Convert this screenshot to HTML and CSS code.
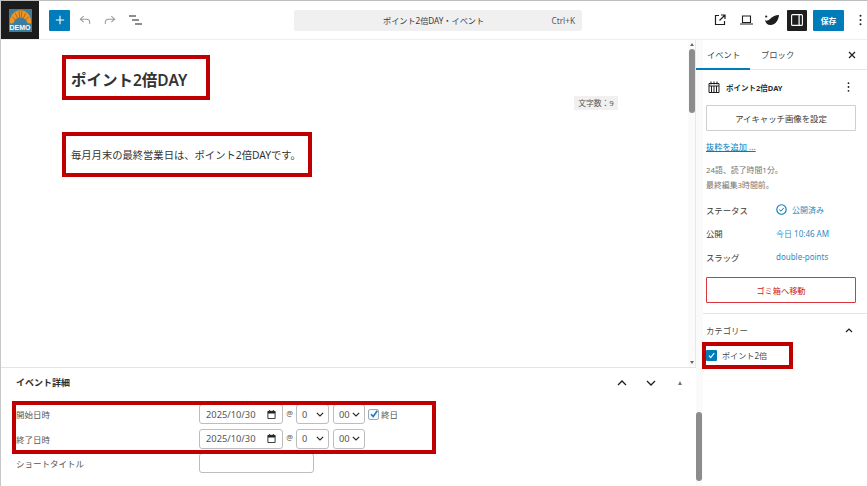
FILE: index.html
```html
<!DOCTYPE html>
<html lang="ja">
<head>
<meta charset="utf-8">
<title>ポイント2倍DAY ‹ イベント</title>
<link rel="stylesheet" href="styles.css">
</head>
<body>
<div class="app">
  <header class="topbar">
    <div class="logo-cell">
      <div class="logo-tile">
        <svg class="croissant" viewBox="0 0 24 15" width="23" height="15">
          <path d="M1 14.500C.2 8 4.500 1 12 1s11.800 7 11 13.500c-1 .6-3.300.2-4-.5-.6-3-3.300-5.500-7-5.500S5.600 11 5 14c-.7.700-3 1.100-4 .5z" fill="#ee9527"/>
          <path d="M6.500 4 9 9.200M10.500 1.500l.6 7M13.500 1.500l-.6 7M17.500 4 15 9.200M3.200 7.500l3.300 3.500M20.800 7.500 17.500 11" stroke="#a85f12" stroke-width=".9" fill="none"/>
        </svg>
        <span class="logo-text">DEMO</span>
      </div>
    </div>
    <div class="tools-left">
      <button class="plus-btn"><svg viewBox="0 0 12 12" width="10" height="10"><path d="M6 1v10M1 6h10" stroke="#fff" stroke-width="1.300"/></svg></button>
      <svg class="tool undo" viewBox="0 0 14 12" width="12" height="11"><path d="M5.500 1 1.500 4.500l4 3.500M1.500 4.500H9c2.300 0 3.500 1.500 3.500 3.500v2" fill="none" stroke="#9a9a9a" stroke-width="1.200"/></svg>
      <svg class="tool redo" viewBox="0 0 14 12" width="12" height="11"><path d="M8.500 1l4 3.500-4 3.500M12.500 4.500H5C2.700 4.500 1.500 6 1.500 8v2" fill="none" stroke="#9a9a9a" stroke-width="1.200"/></svg>
      <svg class="tool list" viewBox="0 0 13 10" width="13" height="10"><path d="M0 1h7M3 5h7M6 9h7" stroke="#1e1e1e" stroke-width="1.200"/></svg>
    </div>
    <div class="search">
      <span class="search-title">ポイント2倍DAY・イベント</span>
      <span class="search-key">Ctrl+K</span>
    </div>
    <div class="tools-right">
      <svg class="r-ext" viewBox="0 0 12 12" width="12" height="12"><path d="M5 1.500H1.500v9h9V7M7 1h4v4M11 1 5.500 6.500" fill="none" stroke="#1e1e1e" stroke-width="1.200"/></svg>
      <svg class="r-dev" viewBox="0 0 13 10" width="13" height="10"><path d="M2.500 1h8v6.500h-8zM0 9h13" fill="none" stroke="#1e1e1e" stroke-width="1.100"/></svg>
      <svg class="r-leaf" viewBox="0 0 16 12" width="16" height="12"><path d="M1 6c1.500 1.500 3 .5 5-1 2-2 5-4 9-4-.2 4-3 10-8.500 10C3.500 11 1.500 9 1 6z" fill="#1e1e1e"/><circle cx="2.200" cy="2.500" r="1.100" fill="#1e1e1e"/></svg>
      <button class="panel-btn"><svg viewBox="0 0 12 12" width="12" height="12"><rect x=".6" y=".6" width="10.800" height="10.800" rx="1" fill="none" stroke="#fff" stroke-width="1.100"/><rect x="7.500" y="1" width="1.200" height="10" fill="#fff"/></svg></button>
      <button class="save-btn">保存</button>
      <svg class="r-more" viewBox="0 0 3 12" width="3" height="12"><circle cx="1.500" cy="1.800" r="1" fill="#1e1e1e"/><circle cx="1.500" cy="6" r="1" fill="#1e1e1e"/><circle cx="1.500" cy="10.200" r="1" fill="#1e1e1e"/></svg>
    </div>
  </header>

  <div class="workspace">
    <div class="left">
      <div class="upper">
        <main class="editor">
          <h1 class="post-title">ポイント2倍DAY</h1>
          <div class="count-row"><span class="count">文字数：9</span></div>
          <p class="post-body">毎月月末の最終営業日は、ポイント2倍DAYです。</p>
        </main>
        <div class="scroll-up">
          <span class="arrow-up"></span>
          <span class="thumb"></span>
          <span class="arrow-down"></span>
        </div>
      </div>
      <section class="meta">
        <div class="meta-head">
          <h2>イベント詳細</h2>
          <svg class="m-up" viewBox="0 0 10 6" width="10" height="6"><path d="M1 5l4-4 4 4" fill="none" stroke="#1e1e1e" stroke-width="1.300"/></svg>
          <svg class="m-down" viewBox="0 0 10 6" width="10" height="6"><path d="M1 1l4 4 4-4" fill="none" stroke="#1e1e1e" stroke-width="1.300"/></svg>
          <span class="m-tri"></span>
        </div>
        <div class="meta-row">
          <span class="meta-label">開始日時</span>
          <span class="date">2025/10/30<svg viewBox="0 0 10 10" width="9" height="9"><path d="M1 1.500h8v8H1z" fill="none" stroke="#222" stroke-width="1"/><path d="M1 1.500h8V4H1zM2.500 0h1v2h-1zM6.500 0h1v2h-1z" fill="#222"/></svg></span>
          <span class="at">@</span>
          <span class="sel sel-h">0<svg viewBox="0 0 8 5" width="8" height="5"><path d="M.8.8 4 4 7.200.8" fill="none" stroke="#222" stroke-width="1.100"/></svg></span>
          <span class="sel sel-m">00<svg viewBox="0 0 8 5" width="8" height="5"><path d="M.8.800 4 4 7.200.8" fill="none" stroke="#222" stroke-width="1.100"/></svg></span>
          <span class="chk-small"><svg viewBox="0 0 10 10" width="10" height="10"><path d="M2 5.200 4.200 7.500 8.300 1.800" fill="none" stroke="#1a73c9" stroke-width="1.500"/></svg></span>
          <span class="allday">終日</span>
        </div>
        <div class="meta-row">
          <span class="meta-label">終了日時</span>
          <span class="date">2025/10/30<svg viewBox="0 0 10 10" width="9" height="9"><path d="M1 1.500h8v8H1z" fill="none" stroke="#222" stroke-width="1"/><path d="M1 1.500h8V4H1zM2.500 0h1v2h-1zM6.500 0h1v2h-1z" fill="#222"/></svg></span>
          <span class="at">@</span>
          <span class="sel sel-h">0<svg viewBox="0 0 8 5" width="8" height="5"><path d="M.8.8 4 4 7.200.8" fill="none" stroke="#222" stroke-width="1.100"/></svg></span>
          <span class="sel sel-m">00<svg viewBox="0 0 8 5" width="8" height="5"><path d="M.8.800 4 4 7.200.8" fill="none" stroke="#222" stroke-width="1.100"/></svg></span>
        </div>
        <div class="meta-row">
          <span class="meta-label">ショートタイトル</span>
          <span class="text-input"></span>
        </div>
      </section>
    </div>

    <div class="scroll-side"><span class="thumb-side"></span></div>

    <aside class="sidebar">
      <nav class="tabs">
        <span class="tab active">イベント</span>
        <span class="tab">ブロック</span>
        <svg class="close" viewBox="0 0 8 8" width="8" height="8"><path d="M1 1l6 6M7 1 1 7" stroke="#1e1e1e" stroke-width="1.200"/></svg>
      </nav>
      <section class="panel">
        <div class="post-row">
          <svg viewBox="0 0 12 12" width="12" height="12"><path d="M1 2.500h10V11.500H1zM1 5h10M3 .5v3M6 .5v3M9 .5v3M3.500 5v6.500M6 5v6.500M8.500 5v6.500" fill="none" stroke="#1e1e1e" stroke-width="1"/></svg>
          <strong>ポイント2倍DAY</strong>
          <svg class="post-more" viewBox="0 0 3 10" width="3" height="10"><circle cx="1.500" cy="1.200" r=".9" fill="#1e1e1e"/><circle cx="1.500" cy="5" r=".9" fill="#1e1e1e"/><circle cx="1.500" cy="8.800" r=".9" fill="#1e1e1e"/></svg>
        </div>
        <button class="wide-btn">アイキャッチ画像を設定</button>
        <a class="excerpt">抜粋を追加 ...</a>
        <p class="stats">24語、読了時間1分。<br>最終編集3時間前。</p>
        <div class="info-row info-first"><span>ステータス</span><span class="val"><svg viewBox="0 0 11 11" width="11" height="11"><circle cx="5.500" cy="5.500" r="4.700" fill="none" stroke="#007cba" stroke-width="1.100"/><path d="M3.300 5.600 5 7.200 7.800 3.800" fill="none" stroke="#007cba" stroke-width="1"/></svg>公開済み</span></div>
        <div class="info-row"><span>公開</span><span class="val">今日 10:46 AM</span></div>
        <div class="info-row"><span>スラッグ</span><span class="val">double-points</span></div>
        <button class="trash-btn">ゴミ箱へ移動</button>
      </section>
      <section class="cats">
        <div class="cats-head">
          <span>カテゴリー</span>
          <svg viewBox="0 0 8 5" width="8" height="5"><path d="M1 4l3-3 3 3" fill="none" stroke="#1e1e1e" stroke-width="1.200"/></svg>
        </div>
        <div class="cat-item">
          <span class="cat-box"><svg viewBox="0 0 11 11" width="11" height="11"><path d="M3 5.700 4.700 7.600 8.200 3.200" fill="none" stroke="#fff" stroke-width="1.100"/></svg></span>
          <span>ポイント2倍</span>
        </div>
      </section>
    </aside>
  </div>

  <div class="mark mark-title"></div>
  <div class="mark mark-body"></div>
  <div class="mark mark-cat"></div>
  <div class="mark mark-date"></div>
</div>
</body>
</html>
```
FILE: styles.css
```css
* { box-sizing: border-box; }
html, body { margin: 0; padding: 0; height: 100%; overflow: hidden; background: #fff; }
body {
  font-family: "Noto Sans", "Noto Sans CJK JP", sans-serif;
  color: #1e1e1e;
  font-size: 8.2px;
}
button { font: inherit; padding: 0; border: 0; }
h1, h2, p { margin: 0; }

.app {
  position: relative;
  width: 867px;
  height: 486px;
  display: flex;
  flex-direction: column;
  border-top: 1px solid #bdbdbd;
  border-left: 1px solid #c8c8c8;
}

/* top bar */
.topbar {
  height: 39px;
  flex: none;
  display: flex;
  align-items: center;
  border-bottom: 1px solid #eeeeee;
}
.logo-cell {
  width: 38px;
  height: 38px;
  background: #1c1c1c;
  display: flex;
  align-items: center;
  justify-content: center;
}
.logo-tile {
  width: 23px;
  height: 23px;
  background: #3d7d9f;
  display: flex;
  flex-direction: column;
  align-items: center;
}
.croissant { display: block; }
.logo-text {
  font-family: "Liberation Sans", sans-serif;
  font-weight: bold;
  font-size: 7px;
  line-height: 8px;
  color: #fff;
}
.tools-left {
  width: 255px;
  display: flex;
  align-items: center;
  padding-left: 10px;
}
.plus-btn {
  width: 21px;
  height: 21px;
  border-radius: 1px;
  background: #007cba;
  display: flex;
  align-items: center;
  justify-content: center;
}
.tool { display: block; }
.undo { margin-left: 9px; }
.redo { margin-left: 13px; }
.list { margin-left: 13px; }
.search {
  width: 288px;
  height: 21px;
  background: #f0f0f0;
  border-radius: 2px;
  display: flex;
  align-items: center;
  position: relative;
  color: #3c3c3c;
}
.search-title { margin-left: 89px; font-size: 8.200px; letter-spacing: -.05px; }
.search-key { margin-left: auto; margin-right: 7px; color: #555; font-size: 8.200px; }
.tools-right {
  flex: 1;
  display: flex;
  align-items: center;
}
.r-ext { margin-left: 132px; }
.r-dev { margin-left: 14px; }
.r-leaf { margin-left: 11px; }
.panel-btn {
  width: 20px;
  height: 21px;
  margin-left: 7px;
  background: #1e1e1e;
  border-radius: 1px;
  display: flex;
  align-items: center;
  justify-content: center;
}
.save-btn {
  width: 31px;
  height: 21px;
  margin-left: 6px;
  background: #007cba;
  color: #fff;
  border-radius: 1px;
  font-size: 7.800px;
  font-weight: bold;
}
.r-more { margin-left: 15px; }

/* workspace */
.workspace { flex: 1; min-height: 0; display: flex; }
.left { width: 695px; flex: none; display: flex; flex-direction: column; }
.upper { height: 327px; flex: none; display: flex; }
.editor { flex: 1; min-width: 0; padding: 29px 0 0 70px; }
.post-title { font-size: 15.500px; line-height: 22px; font-weight: 600; color: #333; }
.count-row { display: flex; justify-content: flex-end; margin-top: 5px; padding-right: 70px; }
.count {
  height: 14px;
  width: 44px;
  background: #f0f0f0;
  color: #555;
  font-size: 7.800px;
  line-height: 14px;
  text-align: center;
}
.post-body { margin-top: 37px; font-size: 10.300px; line-height: 16px; color: #333; }

.scroll-up {
  width: 8px;
  display: flex;
  flex-direction: column;
  align-items: center;
  background: #fafafa;
  border-right: 1px solid #e8e8e8;
}
.arrow-up {
  margin-top: 3px;
  width: 0; height: 0;
  border-left: 2.500px solid transparent;
  border-right: 2.500px solid transparent;
  border-bottom: 3px solid #666;
}
.thumb { margin-top: 3px; width: 6px; height: 64px; border-radius: 3px; background: #8c8c8c; }
.arrow-down {
  margin-top: auto;
  margin-bottom: 3px;
  width: 0; height: 0;
  border-left: 2.500px solid transparent;
  border-right: 2.500px solid transparent;
  border-top: 3px solid #666;
}

/* event meta box */
.meta { flex: 1; min-height: 0; border-top: 1px solid #e4e4e4; padding: 0 0 0 15px; color: #555; }
.meta-head {
  display: flex;
  align-items: center;
  height: 29px;
  margin-bottom: 7px;
  color: #2e2e2e;
}
.meta-head h2 { font-size: 9px; font-weight: 700; }
.m-up { margin-left: 547px; }
.m-down { margin-left: 19px; }
.m-tri {
  margin-left: 22px;
  width: 0; height: 0;
  border-left: 2.500px solid transparent;
  border-right: 2.500px solid transparent;
  border-bottom: 4px solid #777;
}
.meta-row { display: flex; align-items: center; height: 20px; margin-bottom: 4.500px; font-size: 8.500px; }
.meta-label { width: 183px; flex: none; }
.date, .sel, .text-input {
  height: 20px;
  background: #fff;
  border: 1px solid #bdbdbd;
  border-radius: 3px;
  display: flex;
  align-items: center;
  justify-content: space-between;
  font-size: 9.300px;
  color: #555;
}
.date { width: 84px; padding: 0 6px 0 6px; }
.date svg, .sel svg { flex: none; }
.at { width: 13px; text-align: center; font-size: 7.500px; margin-top: -3px; }
.sel { padding: 0 4px 0 5px; }
.sel-h { width: 33px; }
.sel-m { width: 32px; margin-left: 4px; }
.chk-small {
  width: 11px;
  height: 11px;
  margin-left: 3px;
  border: 1px solid #9ab;
  border-radius: 2px;
  display: flex;
  align-items: center;
  justify-content: center;
  background: #f6f8fa;
}
.chk-small svg { flex: none; }
.allday { margin-left: 2px; font-size: 8.500px; }
.text-input { width: 115px; }

/* side scrollbar */
.scroll-side { width: 7px; flex: none; background: #fafafa; padding-top: 372px; }
.thumb-side { display: block; width: 6px; height: 69px; border-radius: 3px; background: #8c8c8c; }

/* sidebar */
.sidebar { flex: 1; min-width: 0; display: flex; flex-direction: column; color: #3a3a3a; }
.tabs { height: 30px; flex: none; display: flex; align-items: center; border-bottom: 1px solid #e4e4e4; position: relative; font-size: 8.300px; margin-left: -7px; padding-left: 11px; }
.tab { color: #4a4a4a; width: 53px; height: 30px; line-height: 29px; }
.tab.active { color: #3a3a3a; }
.tab.active::after { content: ""; position: absolute; left: 0; bottom: -1px; width: 54px; height: 2px; background: #007cba; }
.tab + .tab { width: 56px; padding-left: 1px; }
.close { margin-left: 32px; }
.panel { height: 244px; flex: none; padding: 10px 11px 0 3px; border-bottom: 1px solid #e4e4e4; }
.post-row { display: flex; align-items: center; height: 14px; margin-left: 2px; font-size: 7.500px; }
.post-row strong { margin-left: 6px; font-weight: 700; color: #2e2e2e; }
.post-more { margin-left: auto; margin-right: 6px; }
.wide-btn, .trash-btn {
  display: block;
  width: 150px;
  height: 26px;
  background: #fff;
  border-radius: 1px;
}
.wide-btn { margin-top: 11px; border: 1px solid #cfcfcf; color: #3a3a3a; font-size: 8.400px; }
.excerpt { display: block; margin-top: 9px; color: #007cba; text-decoration: underline; font-size: 8.200px; line-height: 14px; }
.stats { margin-top: 9px; color: #757575; font-size: 7.900px; line-height: 15px; }
.info-row { display: flex; align-items: center; height: 23.500px; font-size: 8.400px; color: #3a3a3a; }
.info-first { margin-top: 5px; }
.info-row > span:first-child { width: 70px; }
.val { color: #2a8dc4; font-size: 8px; display: flex; align-items: center; gap: 5px; }
.trash-btn { margin-top: 8px; border: 1px solid #d9363e; color: #cc1818; font-size: 8.200px; }
.cats { padding: 0 11px 0 3px; }
.cats-head { display: flex; justify-content: space-between; align-items: center; height: 30px; margin-top: 1px; padding-right: 3px; font-size: 8.400px; color: #4a4a4a; }
.cat-item { display: flex; align-items: center; gap: 5px; margin-top: 5px; font-size: 8.100px; color: #4a4a4a; }
.cat-box { width: 11px; height: 11px; background: #007cba; border-radius: 1px; display: block; }
.cat-box svg { display: block; }

/* red annotation boxes */
.mark { position: absolute; border: 4px solid #c00000; pointer-events: none; }
.mark-title { left: 61px; top: 54px; width: 148px; height: 45px; }
.mark-body { left: 61px; top: 131px; width: 250px; height: 45px; }
.mark-cat { left: 701px; top: 341px; width: 91px; height: 27px; }
.mark-date { left: 11px; top: 400px; width: 424px; height: 53px; }
```
